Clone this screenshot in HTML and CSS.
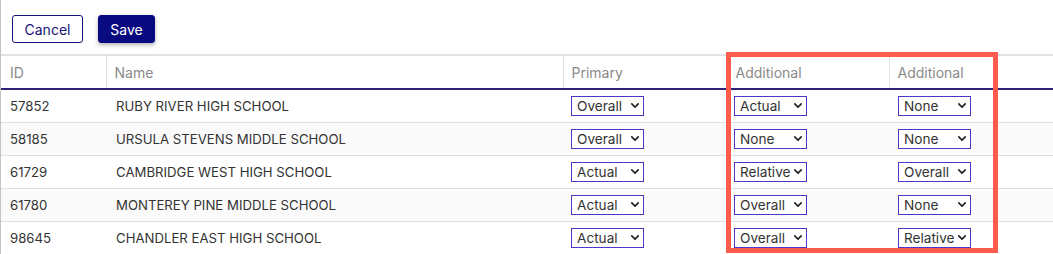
FILE: index.html
```html
<!DOCTYPE html>
<html lang="en">
<head>
<meta charset="utf-8">
<title>Schools</title>
<link rel="stylesheet" href="styles.css">
</head>
<body>
<div class="page">
  <div class="toolbar">
    <button class="btn btn-outline">Cancel</button>
    <button class="btn btn-primary">Save</button>
  </div>
  <table class="grid">
    <colgroup>
      <col class="c-id"><col class="c-name"><col class="c-pri"><col class="c-add"><col class="c-add2">
    </colgroup>
    <thead>
      <tr><th>ID</th><th>Name</th><th>Primary</th><th>Additional</th><th>Additional</th></tr>
    </thead>
    <tbody>
      <tr>
        <td class="id">57852</td><td class="name">RUBY RIVER HIGH SCHOOL</td>
        <td><div class="sel"><span>Overall</span><svg viewBox="0 0 10 6"><path d="M1 1l4 4 4-4"/></svg></div></td>
        <td class="a1"><div class="sel"><span>Actual</span><svg viewBox="0 0 10 6"><path d="M1 1l4 4 4-4"/></svg></div></td>
        <td class="a2"><div class="sel"><span>None</span><svg viewBox="0 0 10 6"><path d="M1 1l4 4 4-4"/></svg></div></td>
      </tr>
      <tr>
        <td class="id">58185</td><td class="name">URSULA STEVENS MIDDLE SCHOOL</td>
        <td><div class="sel"><span>Overall</span><svg viewBox="0 0 10 6"><path d="M1 1l4 4 4-4"/></svg></div></td>
        <td class="a1"><div class="sel"><span>None</span><svg viewBox="0 0 10 6"><path d="M1 1l4 4 4-4"/></svg></div></td>
        <td class="a2"><div class="sel"><span>None</span><svg viewBox="0 0 10 6"><path d="M1 1l4 4 4-4"/></svg></div></td>
      </tr>
      <tr>
        <td class="id">61729</td><td class="name">CAMBRIDGE WEST HIGH SCHOOL</td>
        <td><div class="sel"><span>Actual</span><svg viewBox="0 0 10 6"><path d="M1 1l4 4 4-4"/></svg></div></td>
        <td class="a1"><div class="sel"><span>Relative</span><svg viewBox="0 0 10 6"><path d="M1 1l4 4 4-4"/></svg></div></td>
        <td class="a2"><div class="sel"><span>Overall</span><svg viewBox="0 0 10 6"><path d="M1 1l4 4 4-4"/></svg></div></td>
      </tr>
      <tr>
        <td class="id">61780</td><td class="name">MONTEREY PINE MIDDLE SCHOOL</td>
        <td><div class="sel"><span>Actual</span><svg viewBox="0 0 10 6"><path d="M1 1l4 4 4-4"/></svg></div></td>
        <td class="a1"><div class="sel"><span>Overall</span><svg viewBox="0 0 10 6"><path d="M1 1l4 4 4-4"/></svg></div></td>
        <td class="a2"><div class="sel"><span>None</span><svg viewBox="0 0 10 6"><path d="M1 1l4 4 4-4"/></svg></div></td>
      </tr>
      <tr>
        <td class="id">98645</td><td class="name">CHANDLER EAST HIGH SCHOOL</td>
        <td><div class="sel"><span>Actual</span><svg viewBox="0 0 10 6"><path d="M1 1l4 4 4-4"/></svg></div></td>
        <td class="a1"><div class="sel"><span>Overall</span><svg viewBox="0 0 10 6"><path d="M1 1l4 4 4-4"/></svg></div></td>
        <td class="a2"><div class="sel"><span>Relative</span><svg viewBox="0 0 10 6"><path d="M1 1l4 4 4-4"/></svg></div></td>
      </tr>
    </tbody>
  </table>
  <div class="highlight"></div>
</div>
</body>
</html>
```

FILE: styles.css
```css
* { box-sizing: border-box; }
html, body { margin: 0; padding: 0; background: #fff; }
body {
  font-family: Inter, "Noto Sans", "Liberation Sans", sans-serif;
  color: #333;
  overflow: hidden;
}
.page {
  position: relative;
  border-left: 1px solid #c4c4c4;
  min-height: 254px;
}
.toolbar {
  display: flex;
  gap: 15px;
  padding: 15px 0 11px 11px;
}
.btn {
  height: 28px;
  font-family: inherit;
  font-size: 14px;
  border-radius: 3px;
  padding: 0;
  cursor: pointer;
}
.btn-outline {
  width: 71px;
  background: #fff;
  color: #15157a;
  border: 1px solid #15157a;
}
.btn-primary {
  width: 57px;
  background: #0a0a80;
  color: #fff;
  border: 1px solid #0a0a80;
  box-shadow: 0 2px 4px rgba(0, 0, 0, 0.3);
}
.grid {
  width: 100%;
  table-layout: fixed;
  border-collapse: collapse;
  font-size: 13.2px;
}
.c-id { width: 105px; }
.c-name { width: 457px; }
.c-pri { width: 164px; }
.c-add { width: 162px; }
.c-add2 { width: auto; }
.grid th {
  height: 34px;
  text-align: left;
  font-weight: 400;
  font-size: 14px;
  color: #8a8a8a;
  border-top: 2px solid #dfe2e6;
  border-bottom: 2px solid #2d2178;
  padding: 0 0 0 9px;
}
.grid th + th { border-left: 1px solid #e2e2e2; padding-left: 8px; }
.grid td {
  height: 33px;
  padding: 0 0 0 8px;
  border-bottom: 1px solid #e0e0e0;
  white-space: nowrap;
}
.grid td.id { padding-left: 9px; }
.grid td.name { padding-left: 10px; }
.grid td.a1 { padding-left: 7px; }
.grid td.a2 { padding-left: 9px; }
.grid tbody tr:nth-child(even) td { background: #fafafa; }
.sel {
  width: 73px;
  height: 20px;
  display: flex;
  align-items: center;
  justify-content: space-between;
  border: 1px solid #4a38c8;
  background: #fff;
  padding: 0 4px 0 5px;
  font-size: 13.6px;
  color: #333;
  overflow: hidden;
}
.sel svg {
  width: 8px;
  height: 5px;
  fill: none;
  stroke: #222;
  stroke-width: 2;
  stroke-linecap: round;
  stroke-linejoin: round;
  flex: none;
  margin-left: 2px;
}
.highlight {
  position: absolute;
  left: 725px;
  top: 52px;
  width: 272px;
  height: 201px;
  border: 5px solid #fd5b4e;
  pointer-events: none;
}
```
